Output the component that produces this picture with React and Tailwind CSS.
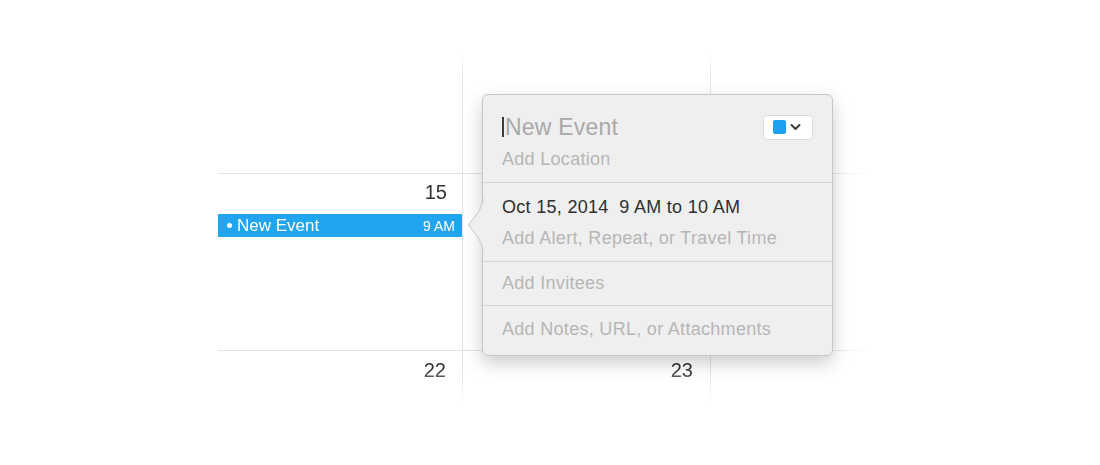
export default function App() {
  return (
    <div className="w-[1100px] h-[465px] bg-white overflow-hidden font-['Liberation_Sans',Arial,sans-serif]">
      <div className="pt-[50px] pl-[218px]">
        <div className="relative w-[650px]">
          {/* calendar grid with faded line ends */}
          <div className="[mask-image:linear-gradient(to_bottom,transparent_0px,black_30px,black_calc(100%-35px),transparent_100%)]">
            <div className="[mask-image:linear-gradient(to_right,black_0px,black_610px,transparent_652px)]">
              <div className="grid grid-cols-[244px_248px_158px] grid-rows-[123px_177px_55px]">
                <div />
                <div className="border-l border-[#e6e6e6]" />
                <div className="border-l border-[#e6e6e6]" />

                <div className="border-t border-[#e2e2e2] flex flex-col">
                  <div className="pt-[6px] pr-[15px] text-right text-[20px] leading-[24px] text-[#333]">15</div>
                  <div className="mt-[10px] h-[23px] bg-[#22a5ef] flex items-center justify-between pl-[9px] pr-[7px] text-white">
                    <div className="flex items-center gap-[5px]">
                      <span className="w-[5px] h-[5px] rounded-full bg-white" />
                      <span className="text-[17px] leading-[20px]">New Event</span>
                    </div>
                    <span className="text-[14px] leading-[16px]">9 AM</span>
                  </div>
                </div>
                <div className="border-t border-l border-[#e2e2e2]" />
                <div className="border-t border-l border-[#e2e2e2]" />

                <div className="border-t border-[#e2e2e2] pt-[7px] pr-[16px] text-right text-[20px] leading-[24px] text-[#333]">22</div>
                <div className="border-t border-l border-[#e2e2e2] pt-[7px] pr-[17px] text-right text-[20px] leading-[24px] text-[#333]">23</div>
                <div className="border-t border-l border-[#e2e2e2]" />
              </div>
            </div>
          </div>

          {/* popover */}
          <div className="absolute left-[264px] top-[44px] w-[351px] rounded-[6px] border border-[#c6c6c6] bg-[#efefef] shadow-[0_7px_18px_rgba(0,0,0,0.2)]">
            <svg className="absolute left-[-16px] top-[102px]" width="17" height="56" viewBox="0 0 17 56">
              <path d="M17 0 L16 0 C16 14 5 22 1.5 28 C5 34 16 42 16 56 L17 56 Z" fill="#efefef" />
              <path d="M16 0 C16 14 5 22 1.5 28 C5 34 16 42 16 56" fill="none" stroke="#c6c6c6" strokeWidth="1" />
            </svg>

            <div className="px-[19px] pt-[18px] pb-[12px]">
              <div className="flex items-center justify-between h-[28px]">
                <div className="flex items-center">
                  <span className="w-[2px] h-[20px] bg-[#3a3a3a] mr-[1px]" />
                  <span className="text-[23px] leading-[28px] tracking-[0.2px] text-[#a9a9a9]">New Event</span>
                </div>
                <div className="w-[50px] h-[25px] rounded-[4px] bg-white border border-[#dcdcdc] flex items-center pl-[9px] gap-[4px]">
                  <span className="w-[13px] h-[14px] rounded-[2px] bg-[#1ca0ef]" />
                  <svg width="11" height="8" viewBox="0 0 11 8">
                    <path d="M1.5 2 L5.5 6 L9.5 2" fill="none" stroke="#3c3c3c" strokeWidth="2" strokeLinecap="round" strokeLinejoin="round" />
                  </svg>
                </div>
              </div>
              <div className="mt-[7px] text-[18px] leading-[22px] tracking-[0.3px] text-[#b6b6b6]">Add Location</div>
            </div>

            <div className="border-t border-[#d5d5d5] px-[19px] pt-[13px] pb-[12px]">
              <div className="text-[18px] leading-[22px] tracking-[0.3px] text-[#2e2e2e] whitespace-pre">Oct 15, 2014  9 AM to 10 AM</div>
              <div className="mt-[9px] text-[18px] leading-[22px] tracking-[0.3px] text-[#b6b6b6]">Add Alert, Repeat, or Travel Time</div>
            </div>

            <div className="border-t border-[#d5d5d5] px-[19px] pt-[10px] pb-[11px]">
              <div className="text-[18px] leading-[22px] tracking-[0.3px] text-[#b6b6b6]">Add Invitees</div>
            </div>

            <div className="border-t border-[#d5d5d5] px-[19px] pt-[12px] pb-[15px]">
              <div className="text-[18px] leading-[22px] tracking-[0.3px] text-[#b6b6b6]">Add Notes, URL, or Attachments</div>
            </div>
          </div>
        </div>
      </div>
    </div>
  );
}
